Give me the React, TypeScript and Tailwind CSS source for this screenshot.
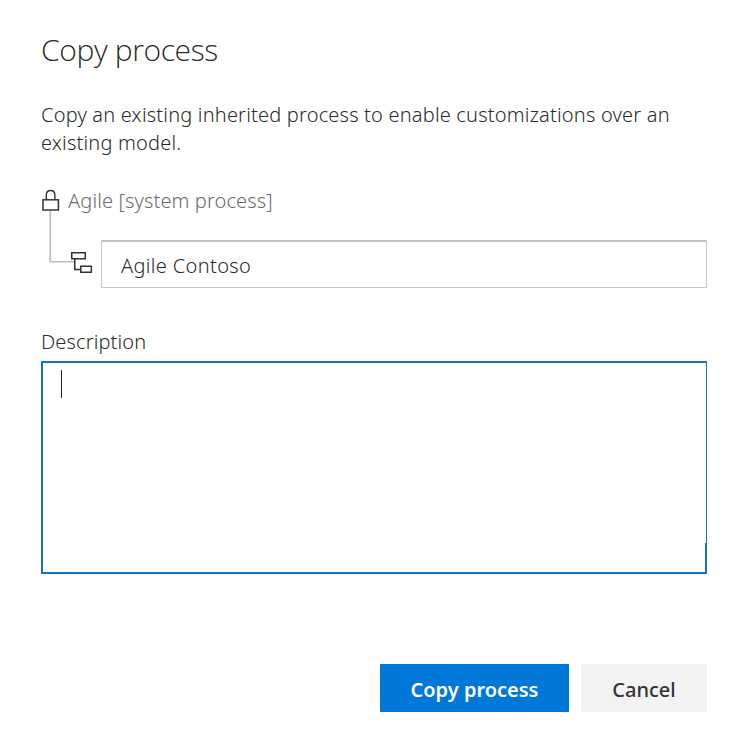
import React, { useState } from "react";

function LockIcon() {
  return (
    <svg className="block h-6 w-[27px] shrink-0" viewBox="0 0 27 24" fill="none" stroke="#333333">
      <path d="M5.3 12V8.2C5.3 5 6.8 3.5 9.6 3.5s4.3 1.5 4.3 4.7V12" strokeWidth="1.4" />
      <rect x="2" y="12.8" width="15.4" height="10.2" strokeWidth="1.5" />
    </svg>
  );
}

function BranchIcon() {
  return (
    <svg className="block h-[77px] w-[60px] shrink-0" viewBox="0 0 60 77" fill="none">
      <path d="M9.25 0V50.75H34" stroke="#bdbdbd" strokeWidth="1.6" />
      <g stroke="#333333" strokeWidth="1.5">
        <rect x="30.75" y="41.75" width="13.5" height="6" fill="#ffffff" />
        <path d="M33.75 48V58.5H39" />
        <rect x="39.75" y="55.25" width="10.6" height="6" fill="#ffffff" />
      </g>
    </svg>
  );
}

export default function App() {
  const [name, setName] = useState("Agile Contoso");

  return (
    <main className="h-[740px] w-[746px] bg-white px-[41px] pt-[30px] pr-[39px] font-['Noto_Sans','Open_Sans',sans-serif] text-[20px] font-[350] text-[#2b2b2b]">
      <h1 className="h-10 text-[30px] leading-10 font-light tracking-[-0.38px] whitespace-nowrap font-['Open_Sans',sans-serif]">
        Copy process
      </h1>
      <p className="mt-[31px] h-14 leading-7 tracking-[0.19px] whitespace-nowrap">
        Copy an existing inherited process to enable customizations over an
        <br />
        existing model.
      </p>
      <div className="mt-[30px] flex h-6 text-[#6b6b6b]">
        <LockIcon />
        <span className="leading-[27px] tracking-[0.12px] whitespace-nowrap">Agile [system process]</span>
      </div>
      <div className="flex h-[77px] items-end">
        <BranchIcon />
        <input
          className="h-12 min-w-0 flex-1 border border-t-2 border-[#c4c4c4] pl-[19px] pt-0.5 tracking-[0.35px] outline-none"
          value={name}
          onChange={(e) => setName(e.target.value)}
        />
      </div>
      <label className="mt-10 block h-[33px] leading-[27px] tracking-[0.12px]">Description</label>
      <div className="flex h-[213px] flex-col items-end border-2 border-r border-[#0f76c1]">
        <div className="mt-[7px] mr-auto ml-[18px] h-7 w-px bg-[#222222]" />
        <div className="mt-auto h-[29px] w-px bg-[#0f76c1]" />
      </div>
      <div className="mt-[90px] flex justify-end gap-3 font-semibold">
        <button className="h-12 w-[189px] bg-[#0078d7] pt-1 whitespace-nowrap text-white">Copy process</button>
        <button className="h-12 w-[126px] bg-[#f3f3f3] pt-1 font-medium whitespace-nowrap text-[#333333]">Cancel</button>
      </div>
    </main>
  );
}
